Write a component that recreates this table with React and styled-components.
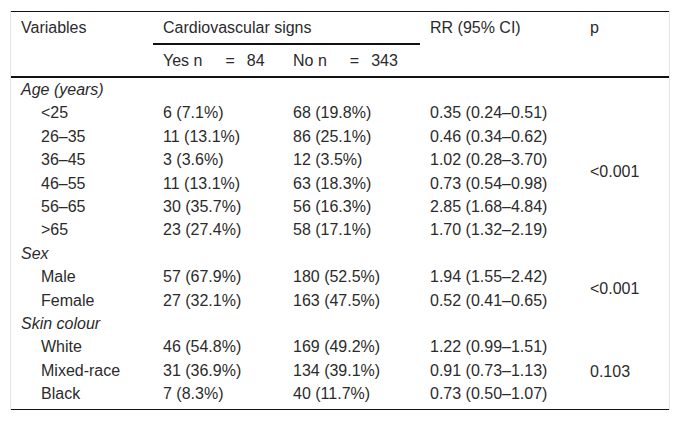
import React from 'react';
import styled, { createGlobalStyle } from 'styled-components';

const GlobalStyle = createGlobalStyle`
  body {
    margin: 0;
    background: #fff;
    font-family: "Liberation Sans", Arial, sans-serif;
    color: #2b2b2b;
  }
`;

const Frame = styled.div`
  margin: 11px 0 0 10px;
  width: 658px;
  border-left: 1px solid #e4e4e4;
  border-right: 1px solid #e4e4e4;
`;

const Table = styled.table`
  width: 658px;
  table-layout: fixed;
  border-collapse: separate;
  border-spacing: 0;
  border-top: 1px solid #111;
  border-bottom: 1px solid #111;
  font-size: 16px;
`;

const HeadCell = styled.th`
  text-align: left;
  font-weight: normal;
  vertical-align: top;
  padding: 6px 10px;
  line-height: 19px;
  white-space: nowrap;
  border-bottom: ${({ $rule }) => ($rule ? '2px solid #111' : 'none')};
`;

const Cell = styled.td`
  padding: 2px 10px;
  padding-left: ${({ $indent }) => ($indent ? '30px' : '10px')};
  padding-bottom: ${({ $last }) => ($last ? '5px' : '2px')};
  line-height: 19.4px;
  vertical-align: middle;
  white-space: nowrap;
  font-style: ${({ $italic }) => ($italic ? 'italic' : 'normal')};
`;

const Eq = styled.span`
  margin: 0 12px 0 23px;
`;

const groups = [
  {
    label: 'Age (years)',
    p: '<0.001',
    rows: [
      ['<25', '6 (7.1%)', '68 (19.8%)', '0.35 (0.24–0.51)'],
      ['26–35', '11 (13.1%)', '86 (25.1%)', '0.46 (0.34–0.62)'],
      ['36–45', '3 (3.6%)', '12 (3.5%)', '1.02 (0.28–3.70)'],
      ['46–55', '11 (13.1%)', '63 (18.3%)', '0.73 (0.54–0.98)'],
      ['56–65', '30 (35.7%)', '56 (16.3%)', '2.85 (1.68–4.84)'],
      ['>65', '23 (27.4%)', '58 (17.1%)', '1.70 (1.32–2.19)'],
    ],
  },
  {
    label: 'Sex',
    p: '<0.001',
    rows: [
      ['Male', '57 (67.9%)', '180 (52.5%)', '1.94 (1.55–2.42)'],
      ['Female', '27 (32.1%)', '163 (47.5%)', '0.52 (0.41–0.65)'],
    ],
  },
  {
    label: 'Skin colour',
    p: '0.103',
    rows: [
      ['White', '46 (54.8%)', '169 (49.2%)', '1.22 (0.99–1.51)'],
      ['Mixed-race', '31 (36.9%)', '134 (39.1%)', '0.91 (0.73–1.13)'],
      ['Black', '7 (8.3%)', '40 (11.7%)', '0.73 (0.50–1.07)'],
    ],
  },
];

const App = () => (
  <>
    <GlobalStyle />
    <Frame>
      <Table>
        <colgroup>
          <col style={{ width: 142 }} />
          <col style={{ width: 130 }} />
          <col style={{ width: 137 }} />
          <col style={{ width: 160 }} />
          <col style={{ width: 89 }} />
        </colgroup>
        <thead>
          <tr>
            <HeadCell rowSpan={2} $rule>Variables</HeadCell>
            <HeadCell colSpan={2} $rule>Cardiovascular signs</HeadCell>
            <HeadCell rowSpan={2} $rule>RR (95% CI)</HeadCell>
            <HeadCell rowSpan={2} $rule>p</HeadCell>
          </tr>
          <tr>
            <HeadCell $rule>Yes n<Eq>=</Eq>84</HeadCell>
            <HeadCell $rule>No n<Eq>=</Eq>343</HeadCell>
          </tr>
        </thead>
        <tbody>
          {groups.map((g, gi) => (
            <React.Fragment key={g.label}>
              <tr>
                <Cell $italic>{g.label}</Cell>
                <Cell />
                <Cell />
                <Cell />
                <Cell />
              </tr>
              {g.rows.map((r, ri) => {
                const last = gi === groups.length - 1 && ri === g.rows.length - 1;
                return (
                  <tr key={r[0]}>
                    <Cell $indent $last={last}>{r[0]}</Cell>
                    <Cell $last={last}>{r[1]}</Cell>
                    <Cell $last={last}>{r[2]}</Cell>
                    <Cell $last={last}>{r[3]}</Cell>
                    {ri === 0 && <Cell rowSpan={g.rows.length}>{g.p}</Cell>}
                  </tr>
                );
              })}
            </React.Fragment>
          ))}
        </tbody>
      </Table>
    </Frame>
  </>
);

export default App;
